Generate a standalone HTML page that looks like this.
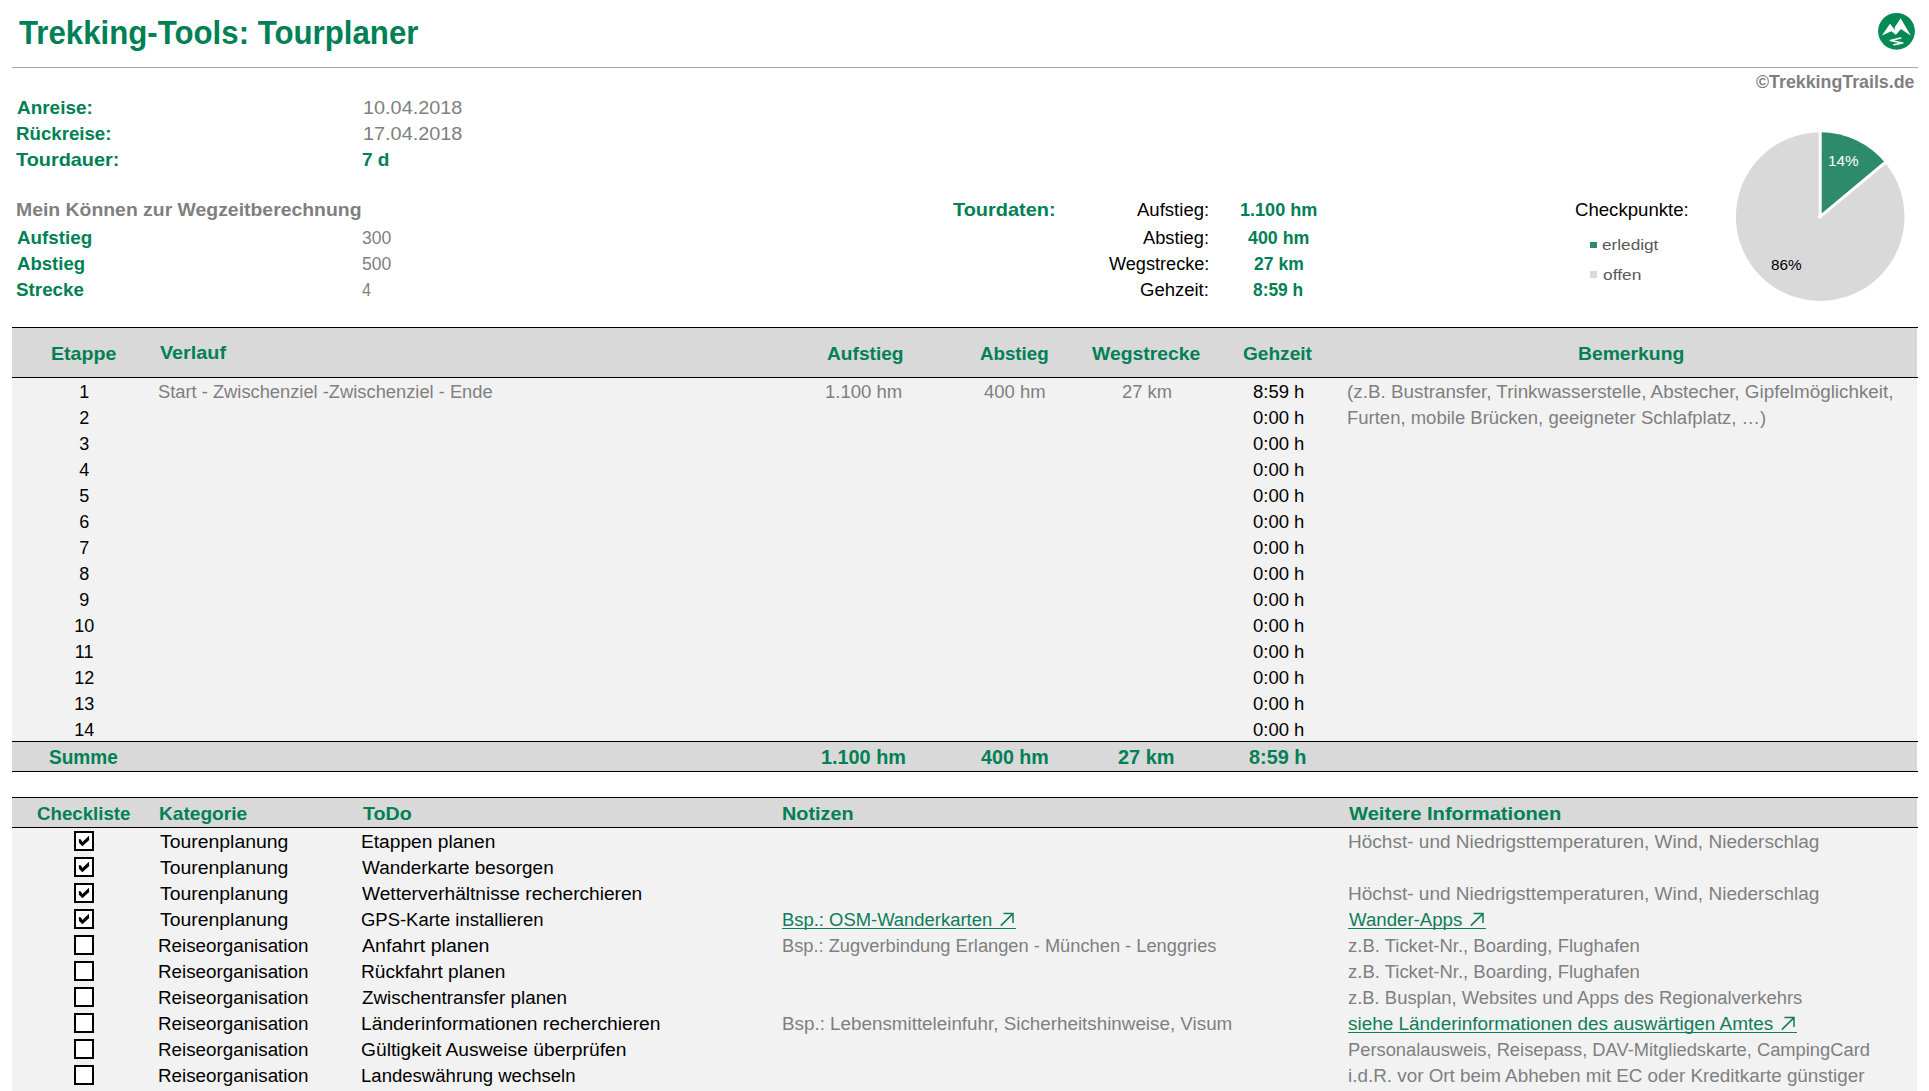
<!DOCTYPE html>
<html><head><meta charset="utf-8"><title>Trekking-Tools: Tourplaner</title><style>
html,body{margin:0;padding:0}
body{width:1929px;height:1091px;background:#fff;position:relative;overflow:hidden;font-family:"Liberation Sans",sans-serif}
.t{position:absolute;white-space:pre;line-height:normal;transform-origin:0 0}
.r{position:absolute}
</style></head><body>
<div class="r" style="left:12px;top:67px;width:1906px;height:1px;background:#a6a6a6"></div>
<div class="r" style="left:12px;top:327px;width:1906px;height:1px;background:#000"></div>
<div class="r" style="left:12px;top:328px;width:1905px;height:49px;background:#d9d9d9"></div>
<div class="r" style="left:12px;top:377px;width:1906px;height:1px;background:#000"></div>
<div class="r" style="left:12px;top:378px;width:1905px;height:363px;background:#f2f2f2"></div>
<div class="r" style="left:12px;top:741px;width:1906px;height:1px;background:#000"></div>
<div class="r" style="left:12px;top:742px;width:1905px;height:29px;background:#d9d9d9"></div>
<div class="r" style="left:12px;top:771px;width:1906px;height:1px;background:#000"></div>
<div class="r" style="left:12px;top:797px;width:1906px;height:1px;background:#000"></div>
<div class="r" style="left:12px;top:798px;width:1905px;height:29px;background:#d9d9d9"></div>
<div class="r" style="left:12px;top:827px;width:1906px;height:1px;background:#000"></div>
<div class="r" style="left:12px;top:828px;width:1905px;height:263px;background:#f2f2f2"></div>
<svg class="r" style="left:1872px;top:8px" width="48" height="48" viewBox="0 0 48 48">
<circle cx="24.5" cy="23.3" r="18.4" fill="#058a55"/>
<path d="M9.9 27.5 L18 15.8 L23.3 22.6 L22.6 19.6 L28.6 10.3 L38.9 27.7 L29 20.9 L23.8 26.8 L19.4 23.3 Z" fill="#fff"/>
<path d="M28.8 30.1 L18.4 32.5 L30.8 34.9 L21.8 36.7" stroke="#fff" stroke-width="1.5" fill="none" stroke-linejoin="round" stroke-linecap="round"/>
</svg>
<svg class="r" style="left:1720px;top:120px" width="200" height="200" viewBox="1720 120 200 200">
<circle cx="1820.2" cy="216.6" r="84.3" fill="#d9d9d9"/>
<path d="M1820.2 216.6 L1820.2 132.3 A84.3 84.3 0 0 1 1885.1 162.8 Z" fill="#2d8b6b"/>
<path d="M1820.2 218 L1820.2 128 M1818.7 217.8 L1890 158.5" stroke="#fff" stroke-width="3" fill="none"/>
</svg>
<div class="r" style="left:1590px;top:242px;width:7px;height:6px;background:#2d8b6b"></div>
<div class="r" style="left:1590px;top:271px;width:7px;height:7px;background:#d9d9d9"></div>
<div class="r" style="left:74px;top:831px;width:16px;height:16px;border:2px solid #000;background:#fff"></div>
<svg class="r" style="left:74px;top:831px" width="20" height="20" viewBox="0 0 20 20"><path d="M4.8 7.9 L7 8.6 L8.4 10.9 L13.1 6.6 L14.9 4.8 L15.2 8.9 L8.4 15.2 L5 11.8 Z" fill="#000"/></svg>
<div class="r" style="left:74px;top:857px;width:16px;height:16px;border:2px solid #000;background:#fff"></div>
<svg class="r" style="left:74px;top:857px" width="20" height="20" viewBox="0 0 20 20"><path d="M4.8 7.9 L7 8.6 L8.4 10.9 L13.1 6.6 L14.9 4.8 L15.2 8.9 L8.4 15.2 L5 11.8 Z" fill="#000"/></svg>
<div class="r" style="left:74px;top:883px;width:16px;height:16px;border:2px solid #000;background:#fff"></div>
<svg class="r" style="left:74px;top:883px" width="20" height="20" viewBox="0 0 20 20"><path d="M4.8 7.9 L7 8.6 L8.4 10.9 L13.1 6.6 L14.9 4.8 L15.2 8.9 L8.4 15.2 L5 11.8 Z" fill="#000"/></svg>
<div class="r" style="left:74px;top:909px;width:16px;height:16px;border:2px solid #000;background:#fff"></div>
<svg class="r" style="left:74px;top:909px" width="20" height="20" viewBox="0 0 20 20"><path d="M4.8 7.9 L7 8.6 L8.4 10.9 L13.1 6.6 L14.9 4.8 L15.2 8.9 L8.4 15.2 L5 11.8 Z" fill="#000"/></svg>
<div class="r" style="left:74px;top:935px;width:16px;height:16px;border:2px solid #000;background:#fff"></div>
<div class="r" style="left:74px;top:961px;width:16px;height:16px;border:2px solid #000;background:#fff"></div>
<div class="r" style="left:74px;top:987px;width:16px;height:16px;border:2px solid #000;background:#fff"></div>
<div class="r" style="left:74px;top:1013px;width:16px;height:16px;border:2px solid #000;background:#fff"></div>
<div class="r" style="left:74px;top:1039px;width:16px;height:16px;border:2px solid #000;background:#fff"></div>
<div class="r" style="left:74px;top:1065px;width:16px;height:16px;border:2px solid #000;background:#fff"></div>
<div class="r" style="left:782px;top:928px;width:234px;height:1px;background:#0f7d5a"></div>
<svg class="r" style="left:1000px;top:912px" width="16" height="16" viewBox="0 0 16 16"><path d="M0.8 13.6 L13 1.6 M3.5 1.6 L13 1.6 L13 11" stroke="#0f7d5a" stroke-width="1.5" fill="none"/></svg>
<div class="r" style="left:1348px;top:928px;width:138px;height:1px;background:#0f7d5a"></div>
<svg class="r" style="left:1470px;top:912px" width="16" height="16" viewBox="0 0 16 16"><path d="M0.8 13.6 L13 1.6 M3.5 1.6 L13 1.6 L13 11" stroke="#0f7d5a" stroke-width="1.5" fill="none"/></svg>
<div class="r" style="left:1348px;top:1032px;width:449px;height:1px;background:#0f7d5a"></div>
<svg class="r" style="left:1781px;top:1016px" width="16" height="16" viewBox="0 0 16 16"><path d="M0.8 13.6 L13 1.6 M3.5 1.6 L13 1.6 L13 11" stroke="#0f7d5a" stroke-width="1.5" fill="none"/></svg>

<div class="t" style="left:18.50px;top:14.00px;font-size:33px;font-weight:700;color:#008055;transform:scaleX(0.9457)">Trekking-Tools: Tourplaner</div>
<div class="t" style="left:1755.70px;top:71.00px;font-size:18.5px;font-weight:700;color:#7f7f7f;transform:scaleX(0.9616)">©TrekkingTrails.de</div>
<div class="t" style="left:16.60px;top:97.00px;font-size:18.5px;font-weight:700;color:#008055;transform:scaleX(1.0236)">Anreise:</div>
<div class="t" style="left:15.59px;top:123.00px;font-size:18.5px;font-weight:700;color:#008055;transform:scaleX(1.0087)">Rückreise:</div>
<div class="t" style="left:16.20px;top:149.00px;font-size:18.5px;font-weight:700;color:#008055;transform:scaleX(1.0737)">Tourdauer:</div>
<div class="t" style="left:362.80px;top:98.00px;font-size:18px;font-weight:400;color:#7f7f7f;transform:scaleX(1.1034)">10.04.2018</div>
<div class="t" style="left:362.80px;top:124.00px;font-size:18px;font-weight:400;color:#7f7f7f;transform:scaleX(1.1034)">17.04.2018</div>
<div class="t" style="left:362.17px;top:149.00px;font-size:18.5px;font-weight:700;color:#008055;transform:scaleX(1.0280)">7 d</div>
<div class="t" style="left:16.05px;top:199.00px;font-size:18.5px;font-weight:700;color:#7f7f7f;transform:scaleX(1.0482)">Mein Können zur Wegzeitberechnung</div>
<div class="t" style="left:17.10px;top:227.00px;font-size:18.5px;font-weight:700;color:#008055;transform:scaleX(1.0151)">Aufstieg</div>
<div class="t" style="left:17.10px;top:253.00px;font-size:18.5px;font-weight:700;color:#008055;transform:scaleX(1.0030)">Abstieg</div>
<div class="t" style="left:16.08px;top:279.00px;font-size:18.5px;font-weight:700;color:#008055;transform:scaleX(1.0169)">Strecke</div>
<div class="t" style="left:361.93px;top:228.00px;font-size:18px;font-weight:400;color:#7f7f7f;transform:scaleX(0.9724)">300</div>
<div class="t" style="left:361.93px;top:254.00px;font-size:18px;font-weight:400;color:#7f7f7f;transform:scaleX(0.9724)">500</div>
<div class="t" style="left:362.40px;top:280.00px;font-size:18px;font-weight:400;color:#7f7f7f;transform:scaleX(0.9000)">4</div>
<div class="t" style="left:952.80px;top:199.00px;font-size:18.5px;font-weight:700;color:#008055;transform:scaleX(1.0766)">Tourdaten:</div>
<div class="t" style="left:1136.70px;top:200.00px;font-size:18px;font-weight:400;color:#000000;transform:scaleX(1.0304)">Aufstieg:</div>
<div class="t" style="left:1142.90px;top:228.00px;font-size:18px;font-weight:400;color:#000000;transform:scaleX(1.0141)">Abstieg:</div>
<div class="t" style="left:1109.10px;top:254.00px;font-size:18px;font-weight:400;color:#000000;transform:scaleX(1.0071)">Wegstrecke:</div>
<div class="t" style="left:1139.97px;top:280.00px;font-size:18px;font-weight:400;color:#000000;transform:scaleX(1.0277)">Gehzeit:</div>
<div class="t" style="left:1240.02px;top:199.00px;font-size:18.5px;font-weight:700;color:#008055;transform:scaleX(0.9766)">1.100 hm</div>
<div class="t" style="left:1248.40px;top:227.00px;font-size:18.5px;font-weight:700;color:#008055;transform:scaleX(0.9619)">400 hm</div>
<div class="t" style="left:1253.70px;top:253.00px;font-size:18.5px;font-weight:700;color:#008055;transform:scaleX(0.9481)">27 km</div>
<div class="t" style="left:1253.20px;top:279.00px;font-size:18.5px;font-weight:700;color:#008055;transform:scaleX(0.9396)">8:59 h</div>
<div class="t" style="left:1574.79px;top:199.00px;font-size:18.5px;font-weight:400;color:#000000;transform:scaleX(1.0054)">Checkpunkte:</div>
<div class="t" style="left:1601.95px;top:236.00px;font-size:15px;font-weight:400;color:#595959;transform:scaleX(1.1458)">erledigt</div>
<div class="t" style="left:1603.10px;top:266.00px;font-size:15px;font-weight:400;color:#595959;transform:scaleX(1.1594)">offen</div>
<div class="t" style="left:1828.48px;top:152.00px;font-size:15px;font-weight:400;color:#ffffff;transform:scaleX(1.0207)">14%</div>
<div class="t" style="left:1770.98px;top:256.00px;font-size:15px;font-weight:400;color:#000000;transform:scaleX(1.0207)">86%</div>
<div class="t" style="left:51.14px;top:343.00px;font-size:18.5px;font-weight:700;color:#008055;transform:scaleX(1.0583)">Etappe</div>
<div class="t" style="left:159.80px;top:342.00px;font-size:18.5px;font-weight:700;color:#008055;transform:scaleX(1.0694)">Verlauf</div>
<div class="t" style="left:826.80px;top:343.00px;font-size:18.5px;font-weight:700;color:#008055;transform:scaleX(1.0342)">Aufstieg</div>
<div class="t" style="left:980.40px;top:343.00px;font-size:18.5px;font-weight:700;color:#008055;transform:scaleX(1.0119)">Abstieg</div>
<div class="t" style="left:1092.30px;top:343.00px;font-size:18.5px;font-weight:700;color:#008055;transform:scaleX(1.0447)">Wegstrecke</div>
<div class="t" style="left:1242.87px;top:343.00px;font-size:18.5px;font-weight:700;color:#008055;transform:scaleX(1.0318)">Gehzeit</div>
<div class="t" style="left:1577.96px;top:343.00px;font-size:18.5px;font-weight:700;color:#008055;transform:scaleX(1.0440)">Bemerkung</div>
<div class="t" style="left:79.19px;top:382.00px;font-size:18px;font-weight:400;color:#000000;transform:scaleX(1.0000)">1</div>
<div class="t" style="left:1252.67px;top:382.00px;font-size:18px;font-weight:400;color:#000000;transform:scaleX(1.0250)">8:59 h</div>
<div class="t" style="left:79.19px;top:408.00px;font-size:18px;font-weight:400;color:#000000;transform:scaleX(1.0000)">2</div>
<div class="t" style="left:1252.67px;top:408.00px;font-size:18px;font-weight:400;color:#000000;transform:scaleX(1.0250)">0:00 h</div>
<div class="t" style="left:79.19px;top:434.00px;font-size:18px;font-weight:400;color:#000000;transform:scaleX(1.0000)">3</div>
<div class="t" style="left:1252.67px;top:434.00px;font-size:18px;font-weight:400;color:#000000;transform:scaleX(1.0250)">0:00 h</div>
<div class="t" style="left:79.19px;top:460.00px;font-size:18px;font-weight:400;color:#000000;transform:scaleX(1.0000)">4</div>
<div class="t" style="left:1252.67px;top:460.00px;font-size:18px;font-weight:400;color:#000000;transform:scaleX(1.0250)">0:00 h</div>
<div class="t" style="left:79.19px;top:486.00px;font-size:18px;font-weight:400;color:#000000;transform:scaleX(1.0000)">5</div>
<div class="t" style="left:1252.67px;top:486.00px;font-size:18px;font-weight:400;color:#000000;transform:scaleX(1.0250)">0:00 h</div>
<div class="t" style="left:79.19px;top:512.00px;font-size:18px;font-weight:400;color:#000000;transform:scaleX(1.0000)">6</div>
<div class="t" style="left:1252.67px;top:512.00px;font-size:18px;font-weight:400;color:#000000;transform:scaleX(1.0250)">0:00 h</div>
<div class="t" style="left:79.19px;top:538.00px;font-size:18px;font-weight:400;color:#000000;transform:scaleX(1.0000)">7</div>
<div class="t" style="left:1252.67px;top:538.00px;font-size:18px;font-weight:400;color:#000000;transform:scaleX(1.0250)">0:00 h</div>
<div class="t" style="left:79.19px;top:564.00px;font-size:18px;font-weight:400;color:#000000;transform:scaleX(1.0000)">8</div>
<div class="t" style="left:1252.67px;top:564.00px;font-size:18px;font-weight:400;color:#000000;transform:scaleX(1.0250)">0:00 h</div>
<div class="t" style="left:79.19px;top:590.00px;font-size:18px;font-weight:400;color:#000000;transform:scaleX(1.0000)">9</div>
<div class="t" style="left:1252.67px;top:590.00px;font-size:18px;font-weight:400;color:#000000;transform:scaleX(1.0250)">0:00 h</div>
<div class="t" style="left:74.18px;top:616.00px;font-size:18px;font-weight:400;color:#000000;transform:scaleX(1.0000)">10</div>
<div class="t" style="left:1252.67px;top:616.00px;font-size:18px;font-weight:400;color:#000000;transform:scaleX(1.0250)">0:00 h</div>
<div class="t" style="left:74.86px;top:642.00px;font-size:18px;font-weight:400;color:#000000;transform:scaleX(1.0000)">11</div>
<div class="t" style="left:1252.67px;top:642.00px;font-size:18px;font-weight:400;color:#000000;transform:scaleX(1.0250)">0:00 h</div>
<div class="t" style="left:74.18px;top:668.00px;font-size:18px;font-weight:400;color:#000000;transform:scaleX(1.0000)">12</div>
<div class="t" style="left:1252.67px;top:668.00px;font-size:18px;font-weight:400;color:#000000;transform:scaleX(1.0250)">0:00 h</div>
<div class="t" style="left:74.18px;top:694.00px;font-size:18px;font-weight:400;color:#000000;transform:scaleX(1.0000)">13</div>
<div class="t" style="left:1252.67px;top:694.00px;font-size:18px;font-weight:400;color:#000000;transform:scaleX(1.0250)">0:00 h</div>
<div class="t" style="left:74.18px;top:720.00px;font-size:18px;font-weight:400;color:#000000;transform:scaleX(1.0000)">14</div>
<div class="t" style="left:1252.67px;top:720.00px;font-size:18px;font-weight:400;color:#000000;transform:scaleX(1.0250)">0:00 h</div>
<div class="t" style="left:158.28px;top:382.00px;font-size:18px;font-weight:400;color:#7f7f7f;transform:scaleX(1.0168)">Start - Zwischenziel -Zwischenziel - Ende</div>
<div class="t" style="left:825.17px;top:382.00px;font-size:18px;font-weight:400;color:#7f7f7f;transform:scaleX(1.0301)">1.100 hm</div>
<div class="t" style="left:984.30px;top:382.00px;font-size:18px;font-weight:400;color:#7f7f7f;transform:scaleX(1.0254)">400 hm</div>
<div class="t" style="left:1121.78px;top:382.00px;font-size:18px;font-weight:400;color:#7f7f7f;transform:scaleX(1.0191)">27 km</div>
<div class="t" style="left:1347.35px;top:382.00px;font-size:18px;font-weight:400;color:#7f7f7f;transform:scaleX(1.0465)">(z.B. Bustransfer, Trinkwasserstelle, Abstecher, Gipfelmöglichkeit,</div>
<div class="t" style="left:1347.37px;top:408.00px;font-size:18px;font-weight:400;color:#7f7f7f;transform:scaleX(1.0271)">Furten, mobile Brücken, geeigneter Schlafplatz, …)</div>
<div class="t" style="left:48.75px;top:746.00px;font-size:20px;font-weight:700;color:#008055;transform:scaleX(0.9521)">Summe</div>
<div class="t" style="left:820.91px;top:746.00px;font-size:20px;font-weight:700;color:#008055;transform:scaleX(0.9917)">1.100 hm</div>
<div class="t" style="left:980.50px;top:746.00px;font-size:20px;font-weight:700;color:#008055;transform:scaleX(0.9838)">400 hm</div>
<div class="t" style="left:1117.80px;top:746.00px;font-size:20px;font-weight:700;color:#008055;transform:scaleX(0.9964)">27 km</div>
<div class="t" style="left:1249.21px;top:746.00px;font-size:20px;font-weight:700;color:#008055;transform:scaleX(0.9929)">8:59 h</div>
<div class="t" style="left:36.89px;top:803.00px;font-size:18.5px;font-weight:700;color:#008055;transform:scaleX(1.0088)">Checkliste</div>
<div class="t" style="left:158.77px;top:803.00px;font-size:18.5px;font-weight:700;color:#008055;transform:scaleX(1.0321)">Kategorie</div>
<div class="t" style="left:362.60px;top:803.00px;font-size:18.5px;font-weight:700;color:#008055;transform:scaleX(1.0600)">ToDo</div>
<div class="t" style="left:781.83px;top:803.00px;font-size:18.5px;font-weight:700;color:#008055;transform:scaleX(1.0708)">Notizen</div>
<div class="t" style="left:1349.10px;top:803.00px;font-size:18.5px;font-weight:700;color:#008055;transform:scaleX(1.0887)">Weitere Informationen</div>
<div class="t" style="left:159.50px;top:832.00px;font-size:18px;font-weight:400;color:#000000;transform:scaleX(1.0780)">Tourenplanung</div>
<div class="t" style="left:361.03px;top:832.00px;font-size:18px;font-weight:400;color:#000000;transform:scaleX(1.0653)">Etappen planen</div>
<div class="t" style="left:1348.04px;top:832.00px;font-size:18px;font-weight:400;color:#7f7f7f;transform:scaleX(1.0565)">Höchst- und Niedrigsttemperaturen, Wind, Niederschlag</div>
<div class="t" style="left:159.50px;top:858.00px;font-size:18px;font-weight:400;color:#000000;transform:scaleX(1.0780)">Tourenplanung</div>
<div class="t" style="left:362.10px;top:858.00px;font-size:18px;font-weight:400;color:#000000;transform:scaleX(1.0505)">Wanderkarte besorgen</div>
<div class="t" style="left:159.50px;top:884.00px;font-size:18px;font-weight:400;color:#000000;transform:scaleX(1.0780)">Tourenplanung</div>
<div class="t" style="left:362.10px;top:884.00px;font-size:18px;font-weight:400;color:#000000;transform:scaleX(1.0624)">Wetterverhältnisse recherchieren</div>
<div class="t" style="left:1348.04px;top:884.00px;font-size:18px;font-weight:400;color:#7f7f7f;transform:scaleX(1.0565)">Höchst- und Niedrigsttemperaturen, Wind, Niederschlag</div>
<div class="t" style="left:159.50px;top:910.00px;font-size:18px;font-weight:400;color:#000000;transform:scaleX(1.0780)">Tourenplanung</div>
<div class="t" style="left:361.08px;top:910.00px;font-size:18px;font-weight:400;color:#000000;transform:scaleX(1.0250)">GPS-Karte installieren</div>
<div class="t" style="left:782.38px;top:910.00px;font-size:18px;font-weight:400;color:#0f7d5a;transform:scaleX(1.0230)">Bsp.: OSM-Wanderkarten</div>
<div class="t" style="left:1349.10px;top:910.00px;font-size:18px;font-weight:400;color:#0f7d5a;transform:scaleX(1.0358)">Wander-Apps</div>
<div class="t" style="left:158.46px;top:936.00px;font-size:18px;font-weight:400;color:#000000;transform:scaleX(1.0437)">Reiseorganisation</div>
<div class="t" style="left:362.10px;top:936.00px;font-size:18px;font-weight:400;color:#000000;transform:scaleX(1.0888)">Anfahrt planen</div>
<div class="t" style="left:782.19px;top:936.00px;font-size:18px;font-weight:400;color:#7f7f7f;transform:scaleX(1.0145)">Bsp.: Zugverbindung Erlangen - München - Lenggries</div>
<div class="t" style="left:1348.07px;top:936.00px;font-size:18px;font-weight:400;color:#7f7f7f;transform:scaleX(1.0273)">z.B. Ticket-Nr., Boarding, Flughafen</div>
<div class="t" style="left:158.46px;top:962.00px;font-size:18px;font-weight:400;color:#000000;transform:scaleX(1.0437)">Reiseorganisation</div>
<div class="t" style="left:361.04px;top:962.00px;font-size:18px;font-weight:400;color:#000000;transform:scaleX(1.0619)">Rückfahrt planen</div>
<div class="t" style="left:1348.07px;top:962.00px;font-size:18px;font-weight:400;color:#7f7f7f;transform:scaleX(1.0273)">z.B. Ticket-Nr., Boarding, Flughafen</div>
<div class="t" style="left:158.46px;top:988.00px;font-size:18px;font-weight:400;color:#000000;transform:scaleX(1.0437)">Reiseorganisation</div>
<div class="t" style="left:362.10px;top:988.00px;font-size:18px;font-weight:400;color:#000000;transform:scaleX(1.0456)">Zwischentransfer planen</div>
<div class="t" style="left:1348.08px;top:988.00px;font-size:18px;font-weight:400;color:#7f7f7f;transform:scaleX(1.0233)">z.B. Busplan, Websites und Apps des Regionalverkehrs</div>
<div class="t" style="left:158.46px;top:1014.00px;font-size:18px;font-weight:400;color:#000000;transform:scaleX(1.0437)">Reiseorganisation</div>
<div class="t" style="left:361.03px;top:1014.00px;font-size:18px;font-weight:400;color:#000000;transform:scaleX(1.0691)">Länderinformationen recherchieren</div>
<div class="t" style="left:782.16px;top:1014.00px;font-size:18px;font-weight:400;color:#7f7f7f;transform:scaleX(1.0450)">Bsp.: Lebensmitteleinfuhr, Sicherheitshinweise, Visum</div>
<div class="t" style="left:1348.05px;top:1014.00px;font-size:18px;font-weight:400;color:#0f7d5a;transform:scaleX(1.0519)">siehe Länderinformationen des auswärtigen Amtes</div>
<div class="t" style="left:158.46px;top:1040.00px;font-size:18px;font-weight:400;color:#000000;transform:scaleX(1.0437)">Reiseorganisation</div>
<div class="t" style="left:361.03px;top:1040.00px;font-size:18px;font-weight:400;color:#000000;transform:scaleX(1.0695)">Gültigkeit Ausweise überprüfen</div>
<div class="t" style="left:1348.08px;top:1040.00px;font-size:18px;font-weight:400;color:#7f7f7f;transform:scaleX(1.0176)">Personalausweis, Reisepass, DAV-Mitgliedskarte, CampingCard</div>
<div class="t" style="left:158.46px;top:1066.00px;font-size:18px;font-weight:400;color:#000000;transform:scaleX(1.0437)">Reiseorganisation</div>
<div class="t" style="left:361.07px;top:1066.00px;font-size:18px;font-weight:400;color:#000000;transform:scaleX(1.0306)">Landeswährung wechseln</div>
<div class="t" style="left:1348.05px;top:1066.00px;font-size:18px;font-weight:400;color:#7f7f7f;transform:scaleX(1.0470)">i.d.R. vor Ort beim Abheben mit EC oder Kreditkarte günstiger</div>
</body></html>
